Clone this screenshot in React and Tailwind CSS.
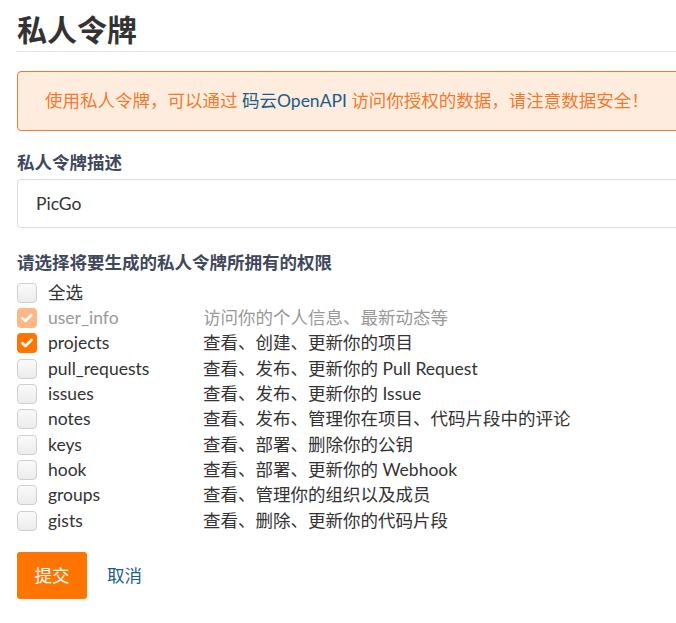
import React from 'react'

const SCOPES = [
  { key: 'user_info', desc: '访问你的个人信息、最新动态等', checked: true, disabled: true },
  { key: 'projects', desc: '查看、创建、更新你的项目', checked: true },
  { key: 'pull_requests', desc: '查看、发布、更新你的 Pull Request' },
  { key: 'issues', desc: '查看、发布、更新你的 Issue' },
  { key: 'notes', desc: '查看、发布、管理你在项目、代码片段中的评论' },
  { key: 'keys', desc: '查看、部署、删除你的公钥' },
  { key: 'hook', desc: '查看、部署、更新你的 Webhook' },
  { key: 'groups', desc: '查看、管理你的组织以及成员' },
  { key: 'gists', desc: '查看、删除、更新你的代码片段' },
]

function Box({ checked, disabled }) {
  if (!checked) {
    return (
      <span className="w-[20px] h-[20px] shrink-0 rounded-[4px] border border-[#cfcfcf] bg-gradient-to-b from-[#fafafa] to-[#ececec]" />
    )
  }
  return (
    <span
      className={
        'w-[20px] h-[20px] shrink-0 rounded-[4px] flex items-center justify-center ' +
        (disabled ? 'bg-[#ffb785]' : 'bg-[#ff7500]')
      }
    >
      <svg className="w-[14px] h-[14px]" viewBox="0 0 14 14" fill="none">
        <path d="M2.5 7.2l3 2.8 6-6" stroke="#fff" strokeWidth="2.6" strokeLinecap="round" strokeLinejoin="round" />
      </svg>
    </span>
  )
}

function Row({ label, desc, checked, disabled }) {
  return (
    <div className="flex items-center h-[25.33px]">
      <Box checked={checked} disabled={disabled} />
      <span className={'ml-[11px] w-[155px] shrink-0 ' + (disabled ? 'text-[#999]' : 'text-[#333]')}>{label}</span>
      {desc && <span className={disabled ? 'text-[#999]' : 'text-[#333]'}>{desc}</span>}
    </div>
  )
}

export default function App() {
  return (
    <div
      className="w-[676px] h-[623px] overflow-hidden bg-white text-[17.5px] leading-[24px]"
      style={{ fontFamily: 'Lato, "Noto Sans CJK SC", sans-serif' }}
    >
      <div className="ml-[17px] w-[700px] pt-[10px]">
        <h1 className="text-[30px] font-bold leading-[38px] text-[#333] pb-[3px] border-b border-[#e3e3e3]">
          私人令牌
        </h1>

        {/* 提示 */}
        <div className="mt-[19px] h-[60px] flex items-center pl-[27px] border border-[#f3792d] rounded-[4px] bg-[#feeddf] text-[#f3792d]">
          使用私人令牌，可以通过&nbsp;<span className="text-[#1b5c88]">码云OpenAPI</span>&nbsp;访问你授权的数据，请注意数据安全！
        </div>

        <div className="mt-[20px] font-bold text-[#40485b]">私人令牌描述</div>
        <div className="mt-[4px] h-[49px] flex items-center pl-[18px] border border-[#dcdcdc] rounded-[4px] text-[#333]">
          PicGo
        </div>

        <div className="mt-[23px] font-bold text-[#40485b]">请选择将要生成的私人令牌所拥有的权限</div>
        <div className="mt-[5px]">
          <Row label="全选" />
          {SCOPES.map((s) => (
            <Row key={s.key} label={s.key} desc={s.desc} checked={s.checked} disabled={s.disabled} />
          ))}
        </div>

        <div className="mt-[19px] flex items-center">
          <button className="w-[70px] h-[47px] rounded-[3px] bg-[#ff7500] text-white">提交</button>
          <span className="ml-[20px] text-[#1b5c88]">取消</span>
        </div>
      </div>
    </div>
  )
}
